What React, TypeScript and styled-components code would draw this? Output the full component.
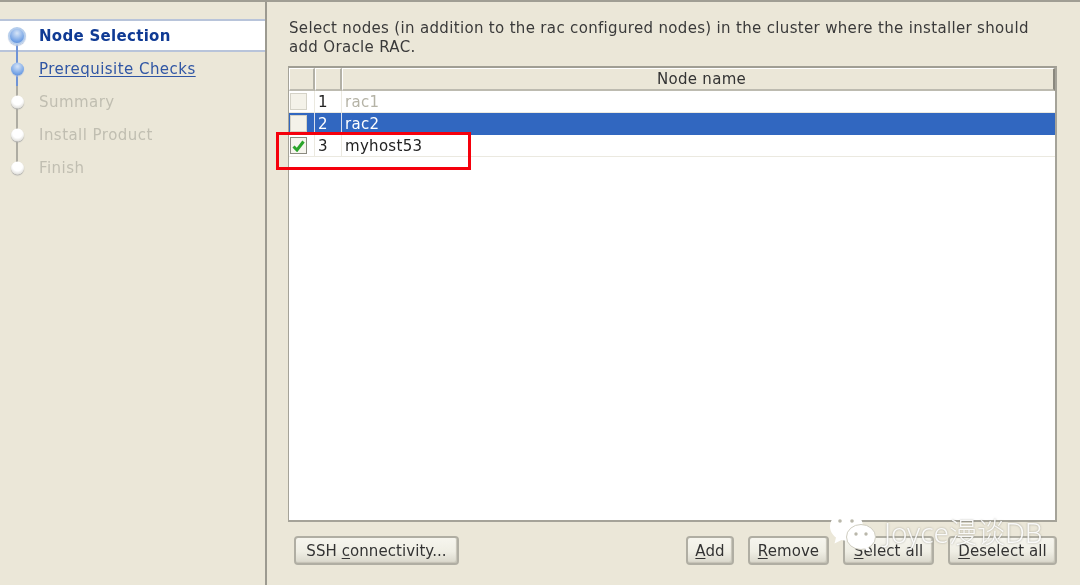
import React from "react";
import styled, { createGlobalStyle } from "styled-components";

const Global = createGlobalStyle`
  html, body { margin: 0; padding: 0; background: #ebe7d8; }
  body { font-family: "DejaVu Sans", "Liberation Sans", sans-serif; overflow: hidden; }
`;

const Page = styled.div`
  position: relative;
  width: 1080px;
  height: 585px;
  display: flex;
  background: #ebe7d8;
  border-top: 2px solid #a09e94;
  box-sizing: border-box;
  overflow: hidden;
  color: #333;
  filter: blur(0.45px);
`;

const Sidebar = styled.aside`
  width: 265px;
  flex: none;
  padding-top: 17px;
  border-right: 2px solid #9c9a90;
`;

const Step = styled.div<{ $active?: boolean }>`
  position: relative;
  height: 33px;
  box-sizing: border-box;
  display: flex;
  align-items: center;
  padding-left: 39px;
  background: ${(p) => (p.$active ? "#fff" : "transparent")};
  border-top: ${(p) => (p.$active ? "2px solid #b8c4da" : "none")};
  border-bottom: ${(p) => (p.$active ? "2px solid #b8c4da" : "none")};
`;

const StepLabel = styled.span<{ $state: "active" | "link" | "off" }>`
  font-size: 15px;
  letter-spacing: ${(p) => (p.$state === "active" ? "0.3px" : "0.46px")};
  white-space: nowrap;
  font-weight: ${(p) => (p.$state === "active" ? 700 : 400)};
  color: ${(p) => (p.$state === "active" ? "#0f3a94" : p.$state === "link" ? "#2f55a4" : "#c0beb1")};
  text-decoration: ${(p) => (p.$state === "link" ? "underline" : "none")};
  text-underline-offset: 2px;
`;

const Line = styled.span<{ $tone: "blue" | "half" | "gray" }>`
  position: absolute;
  left: 16px;
  top: 50%;
  width: 2px;
  height: 33px;
  background: ${(p) =>
    p.$tone === "blue"
      ? "#6f93d6"
      : p.$tone === "half"
        ? "linear-gradient(180deg, #6f93d6 50%, #aeaca2 50%)"
        : "#aeaca2"};
`;

const Dot = styled.span<{ $state: "active" | "link" | "off" }>`
  position: absolute;
  top: 50%;
  left: ${(p) => (p.$state === "active" ? "8px" : "11px")};
  width: ${(p) => (p.$state === "active" ? "18px" : "13px")};
  height: ${(p) => (p.$state === "active" ? "18px" : "13px")};
  transform: translateY(-50%);
  border-radius: 50%;
  box-sizing: border-box;
  background: ${(p) =>
    p.$state === "off"
      ? "radial-gradient(circle at 50% 35%, #fff 45%, #c9c8c2 100%)"
      : "radial-gradient(circle at 50% 30%, #cfe0f6 5%, #6f9fe4 70%, #4f7fce 100%)"};
  border: ${(p) => (p.$state === "active" ? "2px solid #b5cdec" : "none")};
  box-shadow: ${(p) => (p.$state === "off" ? "0 1px 1px #aaa" : "0 1px 1px #b8c4da")};
  z-index: 1;
`;

const Main = styled.main`
  flex: 1;
  min-width: 0;
  display: flex;
  flex-direction: column;
  padding: 17px 23px 19px 21px;
`;

const Intro = styled.p`
  margin: 0 0 9px 1px;
  width: 760px;
  height: 38px;
  font-size: 15px;
  line-height: 19px;
  color: #3a3a3a;
  letter-spacing: 0.33px;
`;

const TableBox = styled.div`
  height: 456px;
  box-sizing: border-box;
  background: #fff;
  border: 1px solid #a5a399;
  border-top: 2px solid #a09e94;
  border-right-width: 2px;
  border-bottom-width: 2px;
`;

const Grid = styled.div`
  display: grid;
  grid-template-columns: 26px 27px 1fr;
`;

const HeadCell = styled.div<{ $last?: boolean }>`
  height: 23px;
  box-sizing: border-box;
  display: flex;
  align-items: center;
  justify-content: center;
  padding-left: ${(p) => (p.$last ? "7px" : "0")};
  background: #ebe7d8;
  border-top: 1px solid #fff;
  border-left: 1px solid #fff;
  border-right: 2px solid ${(p) => (p.$last ? "#8a887e" : "#b3b1a6")};
  border-bottom: 2px solid #bdbbb0;
  font-size: 15px;
  color: #333;
  letter-spacing: 0.3px;
`;

const Cell = styled.div<{ $selected?: boolean; $muted?: boolean }>`
  height: 22px;
  box-sizing: border-box;
  display: flex;
  align-items: center;
  padding-left: 3px;
  font-size: 15px;
  letter-spacing: 0.3px;
  background: ${(p) => (p.$selected ? "#3167c0" : "#fff")};
  color: ${(p) => (p.$selected ? "#fff" : p.$muted ? "#b5b3a6" : "#222")};
  border-right: 1px solid ${(p) => (p.$selected ? "#d8dfee" : "#ebe9e0")};
  border-bottom: 1px solid ${(p) => (p.$selected ? "#3167c0" : "#ebe9e0")};
`;

const CheckCell = styled(Cell)`
  padding-left: 1px;
`;

const NameCell = styled(Cell)`
  border-right: none;
`;

const Check = styled.span<{ $on?: boolean }>`
  width: 17px;
  height: 17px;
  box-sizing: border-box;
  display: flex;
  align-items: center;
  justify-content: center;
  background: ${(p) => (p.$on ? "#f6f5ee" : "#f4f2e9")};
  border: 1px solid ${(p) => (p.$on ? "#8b8b80" : "#d4d2c7")};
`;

const Actions = styled.div`
  display: flex;
  align-items: center;
  gap: 14px;
  margin-top: 14px;
  padding-left: 6px;
`;

const Spacer = styled.div`
  flex: 1;
`;

const Button = styled.button<{ $w: number }>`
  width: ${(p) => p.$w}px;
  height: 29px;
  padding: 0;
  font-family: inherit;
  font-size: 15px;
  letter-spacing: 0.07px;
  color: #333;
  border: 2px solid #b0aea3;
  border-radius: 4px;
  background: linear-gradient(180deg, #f6f5ee 0%, #efeee4 55%, #d9d7cb 100%);
  box-shadow: inset -1px -1px 1px #c5c3b6;
  u { text-underline-offset: 2px; }
`;

const RedBox = styled.div`
  position: absolute;
  left: 276px;
  top: 130px;
  width: 195px;
  height: 38px;
  box-sizing: border-box;
  border: 3px solid #f5000c;
`;

const Watermark = styled.div`
  position: absolute;
  left: 829px;
  top: 509px;
  display: flex;
  align-items: center;
  gap: 8px;
  color: rgba(255, 255, 255, 0.92);
  font-size: 28px;
  font-weight: 300;
  font-family: "Noto Sans", "Noto Sans CJK SC", sans-serif;
  text-shadow: 0 0 2px rgba(110, 110, 100, 0.6);
  white-space: nowrap;
  pointer-events: none;
`;

const WatermarkText = styled.span`
  margin-top: -2px;
`;

const steps: { label: string; state: "active" | "link" | "off" }[] = [
  { label: "Node Selection", state: "active" },
  { label: "Prerequisite Checks", state: "link" },
  { label: "Summary", state: "off" },
  { label: "Install Product", state: "off" },
  { label: "Finish", state: "off" },
];

const rows = [
  { n: 1, name: "rac1", muted: true },
  { n: 2, name: "rac2", selected: true },
  { n: 3, name: "myhost53", checked: true },
];

function WeChat() {
  return (
    <svg width="47" height="41" viewBox="0 0 47 41">
      <path d="M18 1C8.500 1 1 7.500 1 15.500c0 4.500 2.500 8.500 6 11l-1.500 6 7-3.500c2 .5 3.500.8 5.500.8 9.500 0 16-6.500 16-14.300C34 7.500 27.500 1 18 1z" fill="#fff" />
      <ellipse cx="32" cy="26" rx="14.500" ry="12.500" fill="#fff" stroke="#cfcdc0" strokeWidth="1" />
      <path d="M39 36l3 5-7-3z" fill="#fff" />
      <circle cx="11" cy="10" r="1.800" fill="#b9b7aa" />
      <circle cx="23" cy="10" r="1.800" fill="#b9b7aa" />
      <circle cx="27" cy="23" r="1.700" fill="#b9b7aa" />
      <circle cx="37" cy="23" r="1.700" fill="#b9b7aa" />
    </svg>
  );
}

export default function App() {
  return (
    <>
      <Global />
      <Page>
        <Sidebar>
          {steps.map((s, i) => (
            <Step key={s.label} $active={s.state === "active"}>
              {i < steps.length - 1 && <Line $tone={i === 0 ? "blue" : i === 1 ? "half" : "gray"} />}
              <Dot $state={s.state} />
              <StepLabel $state={s.state}>{s.label}</StepLabel>
            </Step>
          ))}
        </Sidebar>
        <Main>
          <Intro>
            Select nodes (in addition to the rac configured nodes) in the cluster where the installer should add
            Oracle RAC.
          </Intro>
          <TableBox>
            <Grid>
              <HeadCell />
              <HeadCell />
              <HeadCell $last>Node name</HeadCell>
              {rows.map((r) => (
                <React.Fragment key={r.n}>
                  <CheckCell $selected={r.selected}>
                    <Check $on={r.checked}>
                      {r.checked && (
                        <svg width="13" height="12" viewBox="0 0 13 12">
                          <path d="M1.500 6.500l3.500 3.500 6.500-8.500" fill="none" stroke="#2aa52a" strokeWidth="3" />
                        </svg>
                      )}
                    </Check>
                  </CheckCell>
                  <Cell $selected={r.selected}>{r.n}</Cell>
                  <NameCell $selected={r.selected} $muted={r.muted}>
                    {r.name}
                  </NameCell>
                </React.Fragment>
              ))}
            </Grid>
          </TableBox>
          <Actions>
            <Button $w={165}>
              SSH <u>c</u>onnectivity...
            </Button>
            <Spacer />
            <Button $w={48}>
              <u>A</u>dd
            </Button>
            <Button $w={81}>
              <u>R</u>emove
            </Button>
            <Button $w={91}>
              <u>S</u>elect all
            </Button>
            <Button $w={109}>
              <u>D</u>eselect all
            </Button>
          </Actions>
        </Main>
        <RedBox />
        <Watermark>
          <WeChat />
          <WatermarkText>Joyce漫谈DB</WatermarkText>
        </Watermark>
      </Page>
    </>
  );
}
